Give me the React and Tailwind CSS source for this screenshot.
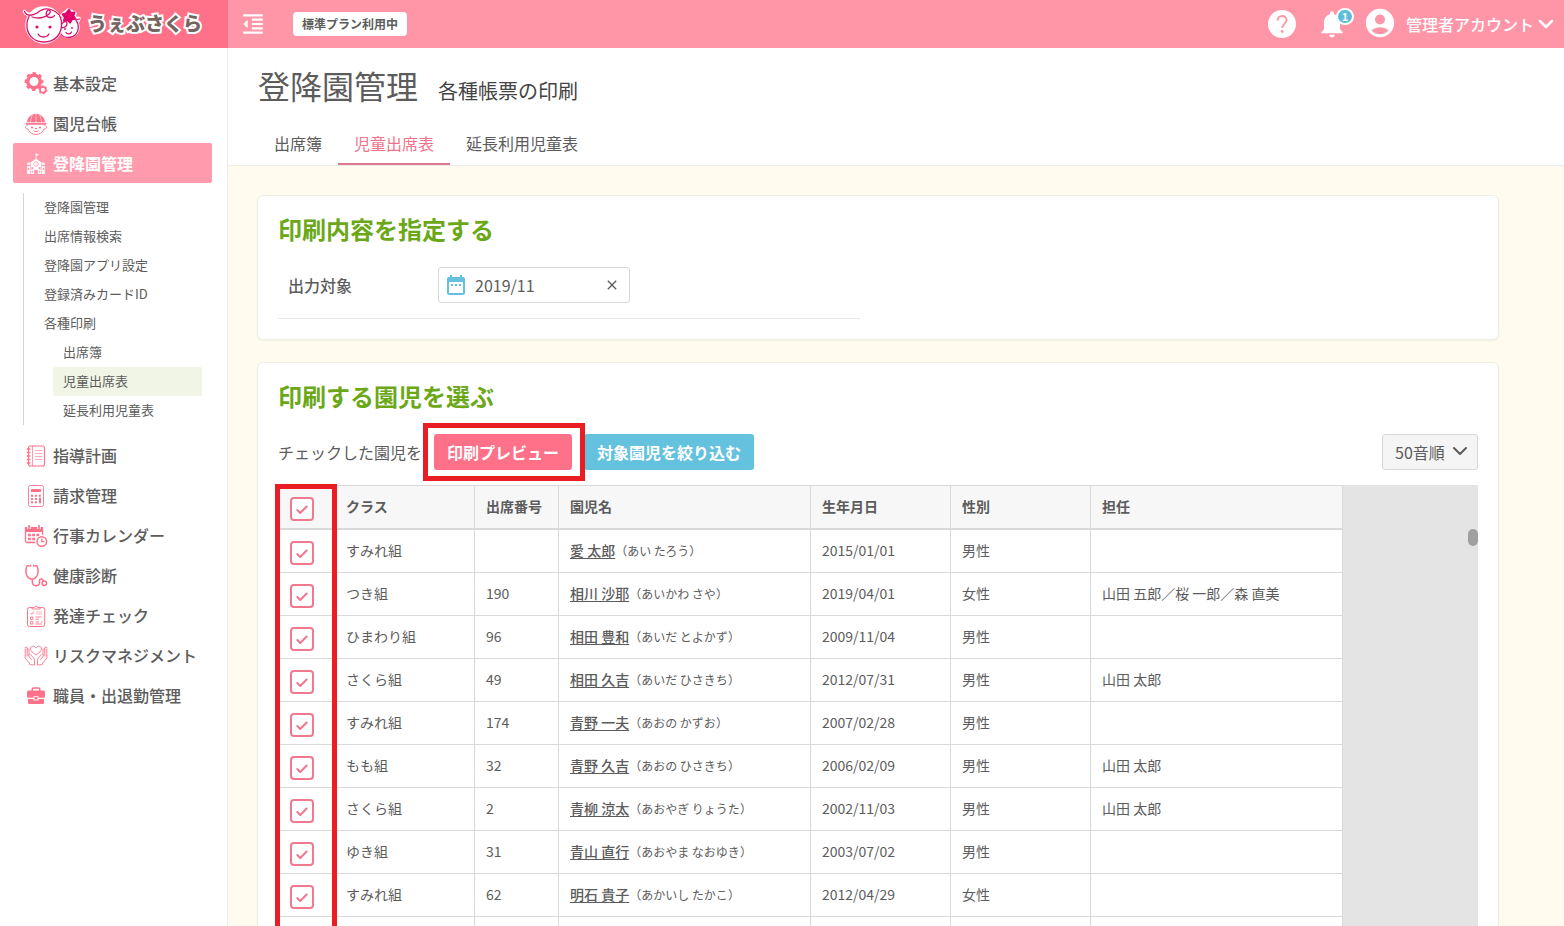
import React, { useState } from "react";
import {
    MdAccountCircle,
    MdClose,
    MdDateRange,
    MdFormatIndentDecrease,
    MdNotifications,
} from "react-icons/md";
import { Check, ChevronDown } from "lucide-react";

const iconClass = "w-6 h-6 shrink-0";

/* Sidebar icons */
const GearsIcon = () => (
    <svg viewBox="0 0 24 24" className={iconClass} fill="none" stroke="currentColor">
        <circle cx="10" cy="9.5" r="6.2" strokeWidth="3.4" />
        <circle cx="10" cy="9.5" r="8.4" strokeWidth="2" strokeDasharray="3.5 3.1" strokeDashoffset="1.7" />
        <circle cx="18.9" cy="17.8" r="2.9" strokeWidth="1.7" />
        <circle cx="18.9" cy="17.8" r="4" strokeWidth="1.1" strokeDasharray="2.1 2.09" />
    </svg>
);

const ChildIcon = () => (
    <svg viewBox="0 0 24 24" className={iconClass} fill="none" stroke="currentColor">
        <path d="M3 10.500a9 8.700 0 0 1 18 0z" fill="currentColor" stroke="none" />
        <rect x="1.5" y="10.8" width="21" height="2" rx="1" fill="currentColor" stroke="none" />
        <path d="M12 1v9.500M8.500 3C7 5.500 6.600 8 6.500 10.500M15.500 3C17 5.500 17.400 8 17.500 10.500M2.500 10.700h19" strokeWidth="0.6" stroke="#fff" />
        <path d="M3.500 13.5c-3 0-2.500 4 .5 3.600 1.500 3.500 4.500 5.400 8 5.400s6.500-1.900 8-5.400c3 .4 3.500-3.600.5-3.600" strokeWidth="0.9" />
        <circle cx="8" cy="15.5" r="1.1" fill="currentColor" stroke="none" />
        <circle cx="16" cy="15.5" r="1.1" fill="currentColor" stroke="none" />
        <path d="M11 16.5h2M9.500 18.500c1.500 1.500 3.500 1.500 5 0" strokeWidth="1" />
    </svg>
);

const SchoolIcon = () => (
    <svg viewBox="0 0 24 24" className={iconClass} fill="currentColor">
        <path d="M11.6 1.500h.8l2.600 1.300-2.600 1.200V7l5 3.500V22h-3.500v-4h-3.800v4H6.600V10.500l5-3.500z" />
        <path d="M4 10.500h2v2.300H2.500zM18 10.500h2l1.500 2.300H18zM3.200 14H6v8H3.200zM18 14h2.800v8H18z" />
        <circle cx="12" cy="12" r="2.300" fill="none" stroke="#ff9bad" strokeWidth="0.8" />
        <path d="M12 10.800V12h1M7.500 15h1.700v2.500H7.500zM14.800 15h1.700v2.500h-1.700zM3.900 16h1.300v2H3.900zM18.800 16h1.300v2h-1.300zM7.500 19h1.700v1.500H7.500zM14.800 19h1.700v1.500h-1.700z" fill="#ff9bad" />
    </svg>
);

const NotebookIcon = () => (
    <svg viewBox="0 0 24 24" className={iconClass} fill="none" stroke="currentColor">
        <rect x="4.5" y="2" width="16" height="20" rx="2" strokeWidth="1.1" />
        <path d="M8.500 2v20" strokeWidth="0.7" />
        <path d="M2.800 5h3.600M2.800 8.500h3.600M2.800 12h3.600M2.800 15.500h3.600M2.800 19h3.600" strokeWidth="1.3" />
        <path d="M11 6.500h7M11 9.500h7M11 12.500h7M11 15.500h7" strokeWidth="0.6" />
    </svg>
);

const CalculatorIcon = () => (
    <svg viewBox="0 0 24 24" className={iconClass} fill="none" stroke="currentColor">
        <rect x="4.5" y="1.5" width="15" height="21" rx="2" strokeWidth="0.9" />
        <path d="M7 5h10v3H7z" fill="currentColor" stroke="none" />
        <path d="M7 11.800h10M7 15h6.500M7 18.200h6.500" strokeWidth="1.9" strokeDasharray="2 1.9" />
        <path d="M16 13.800v5.400" strokeWidth="2" />
    </svg>
);

const CalendarIcon = () => (
    <svg viewBox="0 0 24 24" className={iconClass} fill="none" stroke="currentColor">
        <path d="M11.500 18.500H3A1.500 1.500 0 0 1 1.500 17V4.500h17V11" strokeWidth="1.3" />
        <path d="M1 3h18v5H1z" fill="currentColor" stroke="none" />
        <path d="M5 1v4M15 1v4" strokeWidth="3.6" stroke="#fff" />
        <path d="M5 1v4.500M15 1v4.500" strokeWidth="1.6" />
        <path d="M4 11h12M4 15h8" strokeWidth="2.6" strokeDasharray="2.8 1.4" />
        <circle cx="17.8" cy="17.5" r="6.3" fill="#fff" stroke="none" />
        <circle cx="17.8" cy="17.5" r="4.8" strokeWidth="1.4" />
        <path d="M17.800 14.500v3.200h2.600" strokeWidth="1.2" />
    </svg>
);

const StethoscopeIcon = () => (
    <svg viewBox="0 0 24 24" className={iconClass} fill="none" stroke="currentColor" strokeWidth="1.5">
        <path d="M5.500 1.800H3.200C.5 6 2 12.500 5.500 14.500c1.600.9 3.400.9 5 0C14 12.500 15.500 6 12.800 1.800h-2.300" />
        <path d="M8.300 15.200v2.300c0 5.500 7.200 5.500 7.200 1.500v-2c0-3 3.500-2.800 4 .5" />
        <path d="M6.500.8v2M9.800.8v2" />
        <circle cx="20.3" cy="19.3" r="2.2" />
    </svg>
);

const ChecklistIcon = () => (
    <svg viewBox="0 0 24 24" className={iconClass} fill="none" stroke="currentColor">
        <rect x="3.5" y="3.5" width="17.2" height="19" rx="2" strokeWidth="1" />
        <path d="M8 5V3.500h2.300a1.900 1.900 0 0 1 3.600 0h2.300V5z" fill="#fff" strokeWidth="0.9" />
        <path d="M6.500 9l1.200 1.300L9.800 7.500" strokeWidth="0.9" />
        <path d="M6.500 13h2.300v2.300H6.500zM6.500 17.800h2.300v2.300H6.500z" strokeWidth="0.9" />
        <path d="M12 8h6.500M12 10h6.500" strokeWidth="0.5" />
        <path d="M11.500 13h6M11.500 15.200h3.500M11.500 18h3.500M17 18h1.500M11.500 20h6.500" strokeWidth="0.9" />
    </svg>
);

const HandsIcon = () => (
    <svg viewBox="0 0 24 24" className={iconClass} fill="none" stroke="currentColor" strokeWidth="0.9">
        <path d="M12 11C8.500 8.500 6.500 7 6.500 4.800c0-3 4-3.600 5.500-.8 1.500-2.800 5.500-2.200 5.500.8C17.500 7 15.500 8.500 12 11z" />
        <path d="M1.200 4.500v9.300c0 1.500 4.800 4.500 4.800 7h4.500v-4.500c0-1.500-1.500-3.500-4.300-5.800-1.300-.9-2.400.4-1.500 1.600l2.800 3.700M3.200 12.500V4c0-1.500-2-1.500-2 0M5 10V5.500c0-1-1.500-1-1.600 0" />
        <path d="M22.800 4.500v9.300c0 1.500-4.800 4.500-4.800 7h-4.500v-4.500c0-1.500 1.500-3.500 4.300-5.800 1.300-.9 2.400.4 1.500 1.600l-2.800 3.700M20.800 12.500V4c0-1.500 2-1.500 2 0M19 10V5.500c0-1 1.500-1 1.600 0" />
    </svg>
);

const BriefcaseIcon = () => (
    <svg viewBox="0 0 24 24" className={iconClass} fill="currentColor">
        <path d="M8.200 7V5.500A1.500 1.500 0 0 1 9.700 4h4.600a1.500 1.500 0 0 1 1.500 1.500V7" fill="none" stroke="currentColor" strokeWidth="1.6" />
        <path d="M4.500 6.500h15A1.500 1.500 0 0 1 21 8v4.500a1.500 1.500 0 0 1-1.500 1.200h-5v-1.500h-5v1.500h-5A1.500 1.500 0 0 1 3 12.500V8a1.500 1.500 0 0 1 1.500-1.500z" />
        <path d="M4 15h5.500v1.500h5V15H20v3.800a1.200 1.200 0 0 1-1.200 1.200H5.200A1.200 1.200 0 0 1 4 18.800z" />
        <path d="M10.500 13h3v2.600h-3z" />
    </svg>
);

/* Two smiling faces of the brand mark */
const LogoMark = () => (
    <svg viewBox="0 0 60 44" className="w-[60px] h-11 shrink-0">
        <g fill="#fff" stroke="#fff" strokeWidth="3.5" strokeLinecap="round" strokeLinejoin="round">
            <circle cx="22" cy="23" r="17" />
            <circle cx="46.5" cy="25" r="9.5" />
            <path d="M2.500 9.500c2 4 6 4 9 2M53 16l4 .5-2 4M40 13l6-5 7 3-2 8z" />
        </g>
        <g fill="none" stroke="#d6126f" strokeWidth="1.3" strokeLinecap="round">
            <path d="M2.500 9.500c2 5 8 4.500 12.500 1.500 4-3.500 9.500-5 14-3.500 6 2 10 7 10.500 12.500 1 12-6.500 20-17.500 20S4 32 5 21c.4-3 1-4.500 2-6.500" />
            <path d="M10 15c6 2 13 1 17-3 3.500-4-1-5-2.500-2-1 3 .5 5.500 3.500 5.500 2.500 0 4-1 4.500-2" />
            <path d="M39 32c1.500 2.500 4.500 3.500 7.500 3.500 6 0 10-5 9.800-10.500-.1-3-.8-5-2.300-7l3.500-1" />
            <path d="M39.500 22.500c2-3.500 5.500-4 5.500-1s-2.500 4.500-5 4" />
            <path d="M16 32c2.500 4 8.500 4 11 0M44 30.500c1 2 4.500 2 5.500-.5" />
        </g>
        <g fill="#d6126f">
            <circle cx="15" cy="25" r="1.6" />
            <circle cx="28" cy="25" r="1.6" />
            <circle cx="43" cy="27" r="0.9" />
            <circle cx="50" cy="26" r="0.9" />
        </g>
        <path
            d="M47 7.500l2 3.200 3.800-.5-1.200 3.800 2.200 3-3.800.6-1.800 3.400-2.700-2.700-3.800.7.900-3.700-2.300-3 3.700-1z"
            fill="#e4006c"
            stroke="#e4006c"
            strokeWidth="1.5"
            strokeLinejoin="round"
        />
    </svg>
);

const HelpIcon = () => (
    <svg viewBox="0 0 28 28" className="w-7 h-7">
        <circle cx="14" cy="14" r="14" fill="#fff" />
        <path d="M9.600 10.500c0-6 9-6 9-.4 0 3.300-4.400 3.800-4.400 7.800" fill="none" stroke="#ff96a8" strokeWidth="1.9" />
        <circle cx="14.2" cy="21.5" r="1.4" fill="#ff96a8" />
    </svg>
);

const menuTop = [
    { label: "基本設定", Icon: GearsIcon },
    { label: "園児台帳", Icon: ChildIcon },
    { label: "登降園管理", Icon: SchoolIcon, active: true },
];

const subMenu = [
    { label: "登降園管理" },
    { label: "出席情報検索" },
    { label: "登降園アプリ設定" },
    { label: "登録済みカードID" },
    { label: "各種印刷" },
    { label: "出席簿", nested: true },
    { label: "児童出席表", nested: true, active: true },
    { label: "延長利用児童表", nested: true },
];

const menuBottom = [
    { label: "指導計画", Icon: NotebookIcon },
    { label: "請求管理", Icon: CalculatorIcon },
    { label: "行事カレンダー", Icon: CalendarIcon },
    { label: "健康診断", Icon: StethoscopeIcon },
    { label: "発達チェック", Icon: ChecklistIcon },
    { label: "リスクマネジメント", Icon: HandsIcon },
    { label: "職員・出退勤管理", Icon: BriefcaseIcon },
];

const tabs = ["出席簿", "児童出席表", "延長利用児童表"];

const children = [
    { cls: "すみれ組", no: "", name: "愛 太郎", kana: "あい たろう", birth: "2015/01/01", sex: "男性", teacher: "" },
    { cls: "つき組", no: "190", name: "相川 沙耶", kana: "あいかわ さや", birth: "2019/04/01", sex: "女性", teacher: "山田 五郎／桜 一郎／森 直美" },
    { cls: "ひまわり組", no: "96", name: "相田 豊和", kana: "あいだ とよかず", birth: "2009/11/04", sex: "男性", teacher: "" },
    { cls: "さくら組", no: "49", name: "相田 久吉", kana: "あいだ ひさきち", birth: "2012/07/31", sex: "男性", teacher: "山田 太郎" },
    { cls: "すみれ組", no: "174", name: "青野 一夫", kana: "あおの かずお", birth: "2007/02/28", sex: "男性", teacher: "" },
    { cls: "もも組", no: "32", name: "青野 久吉", kana: "あおの ひさきち", birth: "2006/02/09", sex: "男性", teacher: "山田 太郎" },
    { cls: "さくら組", no: "2", name: "青柳 涼太", kana: "あおやぎ りょうた", birth: "2002/11/03", sex: "男性", teacher: "山田 太郎" },
    { cls: "ゆき組", no: "31", name: "青山 直行", kana: "あおやま なおゆき", birth: "2003/07/02", sex: "男性", teacher: "" },
    { cls: "すみれ組", no: "62", name: "明石 貴子", kana: "あかいし たかこ", birth: "2012/04/29", sex: "女性", teacher: "" },
];

const MenuLink = ({ label, Icon, active }) => (
    <a
        href="#"
        className={
            active
                ? "flex items-center gap-[5px] h-10 pl-[11px] rounded-xs bg-[#ff9bad] text-white font-bold"
                : "flex items-center gap-[5px] h-10 pl-[11px] font-medium"
        }
    >
        <span className={active ? "pt-0.5 text-white" : "pt-0.5 text-[#ff7089]"}>
            <Icon />
        </span>
        {label}
    </a>
);

const PinkCheckbox = ({ label, checked, onChange }) => (
    <label className="relative block w-6 h-6 mt-1.5">
        <input
            type="checkbox"
            aria-label={label}
            checked={checked}
            onChange={onChange}
            className="peer block appearance-none w-6 h-6 border-2 border-[#f0788f] rounded bg-white"
        />
        <Check
            size={14}
            strokeWidth={3.5}
            className="absolute left-[5px] top-[6px] text-[#f0788f] opacity-0 peer-checked:opacity-100 pointer-events-none"
        />
    </label>
);

const App = () => {
    const [month, setMonth] = useState("2019/11");
    const [order, setOrder] = useState("50音順");
    const [checked, setChecked] = useState(children.map(() => true));

    const allChecked = checked.every(Boolean);

    const toggleAll = () => setChecked(children.map(() => !allChecked));
    const toggle = (index) => setChecked(checked.map((c, i) => (i === index ? !c : c)));

    return (
        <div className="h-screen overflow-hidden flex flex-col bg-[#fffbee] text-[#5c5c5c] text-base font-['Noto_Sans_CJK_JP',sans-serif]">
            {/* Header */}
            <header className="flex h-12 shrink-0 bg-[#ff96a8] text-white">
                <a href="#" className="flex items-center w-[228px] shrink-0 pl-[22px] gap-1.5 bg-[#ff7089]">
                    <LogoMark />
                    <span className="pb-0.5 text-[19px] leading-6 font-black text-[#75655f] [-webkit-text-stroke:4px_white] [paint-order:stroke_fill] [stroke-linejoin:round]">
                        うぇぶさくら
                    </span>
                </a>
                <div className="flex flex-1 items-center justify-between pl-3 pr-1.5">
                    <div className="flex items-center gap-[27px]">
                        <button aria-label="メニュー">
                            <MdFormatIndentDecrease size={26} />
                        </button>
                        <span className="h-6 px-[9px] rounded bg-white text-[#5c5c5c] text-xs leading-6 font-bold">
                            標準プラン利用中
                        </span>
                    </div>
                    <div className="flex items-center">
                        <button aria-label="ヘルプ" className="mr-5">
                            <HelpIcon />
                        </button>
                        <button aria-label="お知らせ" className="relative mr-[15px]">
                            <MdNotifications size={32} />
                            <span className="absolute left-5 top-0 w-[18px] h-[17px] rounded-full border-2 border-white bg-[#5dbddb] text-[11px] leading-[13px] font-bold">
                                1
                            </span>
                        </button>
                        <button className="flex items-center font-medium">
                            <MdAccountCircle size={34} className="mr-[9px] -mt-0.5" />
                            管理者アカウント
                            <ChevronDown size={24} strokeWidth={2.5} />
                        </button>
                    </div>
                </div>
            </header>

            <div className="flex flex-1 min-h-0">
                {/* Sidebar */}
                <nav className="w-[228px] shrink-0 pt-[15px] pl-[13px] pr-[15px] bg-white border-r border-[#ececec]">
                    {menuTop.map((item) => (
                        <MenuLink key={item.label} {...item} />
                    ))}
                    <ul className="my-2.5 mx-2.5 border-l border-[#d5d5d5] text-[13px] leading-[27px]">
                        {subMenu.map((item, i) => (
                            <li key={i} className={item.nested ? "pl-[29px]" : "pl-2.5"}>
                                <a
                                    href="#"
                                    className={
                                        item.active
                                            ? "block pl-2.5 pb-0.5 rounded-xs bg-[#f0f5e6]"
                                            : "block pl-2.5 pb-0.5"
                                    }
                                >
                                    {item.label}
                                </a>
                            </li>
                        ))}
                    </ul>
                    {menuBottom.map((item) => (
                        <MenuLink key={item.label} {...item} />
                    ))}
                </nav>

                {/* Main */}
                <main className="flex-1 min-w-0">
                    <div className="pl-[30px] pt-[13px] bg-white border-b border-[#ececec]">
                        <div className="flex items-baseline gap-5">
                            <h1 className="text-[32px] leading-12">登降園管理</h1>
                            <p className="text-xl text-[#444]">各種帳票の印刷</p>
                        </div>
                        <div className="flex mt-3.5">
                            {tabs.map((tab) => (
                                <a
                                    key={tab}
                                    href="#"
                                    className={
                                        tab === "児童出席表"
                                            ? "h-[42px] px-4 leading-10 border-b-2 border-[#e0788d] text-[#f0738b]"
                                            : "h-[42px] px-4 leading-10"
                                    }
                                >
                                    {tab}
                                </a>
                            ))}
                        </div>
                    </div>

                    <div className="pt-[29px] px-[29px]">
                        <section className="max-w-[1242px] px-5 pt-[15px] pb-5 mb-[22px] bg-white rounded-md border border-[#f0ede4] shadow-xs">
                            <h2 className="text-2xl leading-9 font-bold text-[#6aa818]">印刷内容を指定する</h2>
                            <div className="flex items-center max-w-[582px] pt-5 pb-[15px] pl-2.5 border-b border-[#e8e8e8]">
                                <label htmlFor="month" className="w-[150px] font-medium">
                                    出力対象
                                </label>
                                <div className="flex items-center w-48 h-9 px-[5px] border border-[#d8d8d8] rounded-[3px]">
                                    <MdDateRange size={24} className="shrink-0 text-[#65c2de]" />
                                    <input
                                        id="month"
                                        type="text"
                                        value={month}
                                        onChange={(e) => setMonth(e.target.value)}
                                        className="flex-1 min-w-0 pl-[7px] outline-none"
                                    />
                                    <button aria-label="クリア" onClick={() => setMonth("")} className="mr-1">
                                        <MdClose size={16} />
                                    </button>
                                </div>
                            </div>
                        </section>

                        <section className="max-w-[1242px] px-5 pt-[15px] pb-5 bg-white rounded-md border border-[#f0ede4] shadow-xs">
                            <h2 className="text-2xl leading-9 font-bold text-[#6aa818]">印刷する園児を選ぶ</h2>
                            <div className="flex items-center mt-5 mb-[15px]">
                                <span>チェックした園児を</span>
                                <div className="relative z-10 mx-3">
                                    <button className="block h-9 px-[13px] rounded-[3px] bg-[#ff7089] text-white font-bold">
                                        印刷プレビュー
                                    </button>
                                    <div className="absolute -inset-[11px] -right-[13px] border-[5px] border-[#ea1c24] pointer-events-none"></div>
                                </div>
                                <button className="h-9 px-[13px] rounded-[3px] bg-[#65c2de] text-white font-bold">
                                    対象園児を絞り込む
                                </button>
                                <div className="relative ml-auto">
                                    <select
                                        aria-label="並び順"
                                        value={order}
                                        onChange={(e) => setOrder(e.target.value)}
                                        className="block appearance-none w-24 h-9 pl-3 border border-[#d8d8d8] rounded-[3px] bg-[#f5f5f5]"
                                    >
                                        <option>50音順</option>
                                    </select>
                                    <ChevronDown size={24} className="absolute right-1.5 top-[5px] pointer-events-none" />
                                </div>
                            </div>

                            {/* Children list */}
                            <div className="relative bg-[#e4e4e4]">
                                <table className="table-fixed border-separate border-spacing-0 w-[1065px] border-t border-l border-[#d9d9d9] bg-white text-sm text-left [&_td]:border-r [&_td]:border-b [&_td]:border-[#d9d9d9] [&_td]:pl-[11px] [&_td]:pb-0.5 [&_th]:border-r [&_th]:border-b-2 [&_th]:border-[#d9d9d9] [&_th]:pl-[11px] [&_th]:pb-0.5">
                                    <thead>
                                        <tr className="h-11 bg-[#f7f7f7]">
                                            <th className="w-14">
                                                <PinkCheckbox label="すべて選択" checked={allChecked} onChange={toggleAll} />
                                            </th>
                                            <th className="w-[140px]">クラス</th>
                                            <th className="w-[84px]">出席番号</th>
                                            <th className="w-[252px]">園児名</th>
                                            <th className="w-[140px]">生年月日</th>
                                            <th className="w-[140px]">性別</th>
                                            <th className="w-[252px]">担任</th>
                                        </tr>
                                    </thead>
                                    <tbody>
                                        {children.map((child, i) => (
                                            <tr key={i} className="h-[43px]">
                                                <td>
                                                    <PinkCheckbox label={child.name} checked={checked[i]} onChange={() => toggle(i)} />
                                                </td>
                                                <td>{child.cls}</td>
                                                <td>{child.no}</td>
                                                <td>
                                                    <a href="#" className="font-medium underline underline-offset-2">
                                                        {child.name}
                                                    </a>
                                                    <span className="text-xs">（{child.kana}）</span>
                                                </td>
                                                <td>{child.birth}</td>
                                                <td>{child.sex}</td>
                                                <td>{child.teacher}</td>
                                            </tr>
                                        ))}
                                        <tr className="h-[43px]">
                                            <td></td>
                                            <td></td>
                                            <td></td>
                                            <td></td>
                                            <td></td>
                                            <td></td>
                                            <td></td>
                                        </tr>
                                    </tbody>
                                </table>
                                <div className="absolute right-0 top-11 w-2.5 h-[17px] rounded-full bg-[#a0a0a0]"></div>
                                <div className="absolute -left-[3px] -top-px -bottom-1 w-[62px] border-[5px] border-[#ea1c24] pointer-events-none"></div>
                            </div>
                        </section>
                    </div>
                </main>
            </div>
        </div>
    );
};

export default App;
